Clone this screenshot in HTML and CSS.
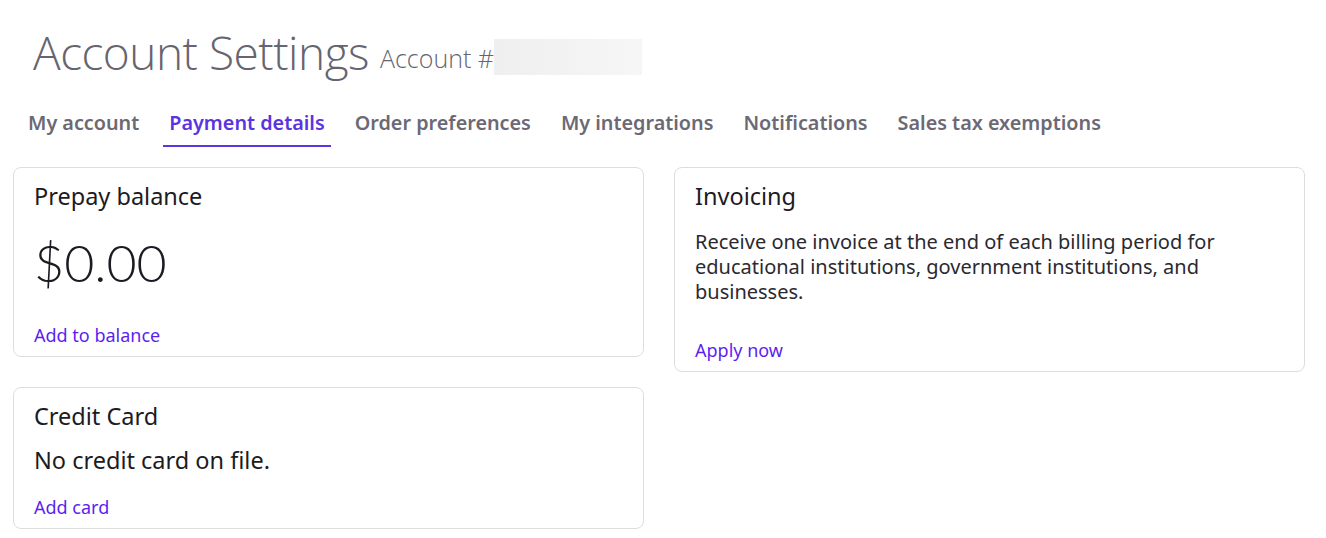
FILE: index.html
```html
<!DOCTYPE html>
<html>
<head>
	<title>Account Settings</title>
	<meta charset="utf-8">
	<link rel="stylesheet" href="styles.css">
</head>
<body>
<div class="page">
	<!-- 标题 -->
	<div class="head">
		<h1>Account Settings</h1>
		<span class="acct">Account #</span>
		<span class="acct-mask"></span>
	</div>

	<!-- 选项卡 -->
	<ul class="tabs">
		<li><a href="javascript:;">My account</a></li>
		<li class="on"><a href="javascript:;">Payment details</a></li>
		<li><a href="javascript:;">Order preferences</a></li>
		<li><a href="javascript:;">My integrations</a></li>
		<li><a href="javascript:;">Notifications</a></li>
		<li><a href="javascript:;">Sales tax exemptions</a></li>
	</ul>

	<div class="cols">
		<div class="col">
			<div class="card card-prepay">
				<h3>Prepay balance</h3>
				<p class="amount">$0.00</p>
				<a class="link" href="javascript:;">Add to balance</a>
			</div>
			<div class="card card-cc">
				<h3>Credit Card</h3>
				<p class="empty">No credit card on file.</p>
				<a class="link" href="javascript:;">Add card</a>
			</div>
		</div>
		<div class="col">
			<div class="card card-inv">
				<h3>Invoicing</h3>
				<p class="desc">Receive one invoice at the end of each billing period for educational institutions, government institutions, and businesses.</p>
				<a class="link" href="javascript:;">Apply now</a>
			</div>
		</div>
	</div>
</div>
</body>
</html>
```

FILE: styles.css
```css
body, ul, li, h1, h3, p { margin: 0; padding: 0; }
body { background-color: #fff; font-family: "Noto Sans", "Open Sans", sans-serif; color: #1c1b22; }
a { text-decoration: none; }
ul { list-style: none; }

.page { padding: 0 21px 0 13px; }

.head { display: flex; align-items: center; padding: 22px 0 0 20px; height: 60px; }
.head h1 { font-family: "Open Sans", sans-serif; font-size: 46px; font-weight: 300; color: #66646f; letter-spacing: -0.5px; line-height: 58px; margin-top: -1px; }
.acct { font-family: "Open Sans", sans-serif; font-size: 25px; font-weight: 300; color: #66646f; margin: 12px 0 0 11px; }
.acct-mask { display: inline-block; width: 148px; height: 36px; margin-top: 9px; background: linear-gradient(90deg, #efefef, #f6f6f6); }

.tabs { display: flex; margin: 20px 0 0 9px; gap: 18px; }
.tabs li { padding: 0 6px; border-bottom: 2px solid transparent; height: 43px; line-height: 42px; }
.tabs a { font-size: 19.8px; font-weight: 600; color: #6b6975; }
.tabs .on { border-bottom-color: #5b33e0; }
.tabs .on a { color: #5b33e0; }

.cols { display: flex; gap: 30px; margin-top: 20px; }
.col { flex: 1; display: flex; flex-direction: column; gap: 30px; }

.card { box-sizing: border-box; border: 1px solid #ddd; border-radius: 8px; padding: 12px 20px 9px; display: flex; flex-direction: column; }
.card h3 { font-size: 23.5px; font-weight: 400; line-height: 32px; }
.link { margin-top: auto; font-size: 18px; line-height: 24px; color: #5b1ff0; }

.card-prepay { height: 190px; }
.amount { font-family: Lato, sans-serif; font-weight: 300; font-size: 52px; line-height: 60px; margin: 20px 0 0; }

.card-cc { height: 142px; }
.empty { font-size: 23.5px; font-weight: 400; margin-top: 13px; line-height: 30px; }

.card-inv { height: 205px; }
.desc { font-size: 20px; line-height: 25px; color: #2a2930; margin-top: 17px; }
```
